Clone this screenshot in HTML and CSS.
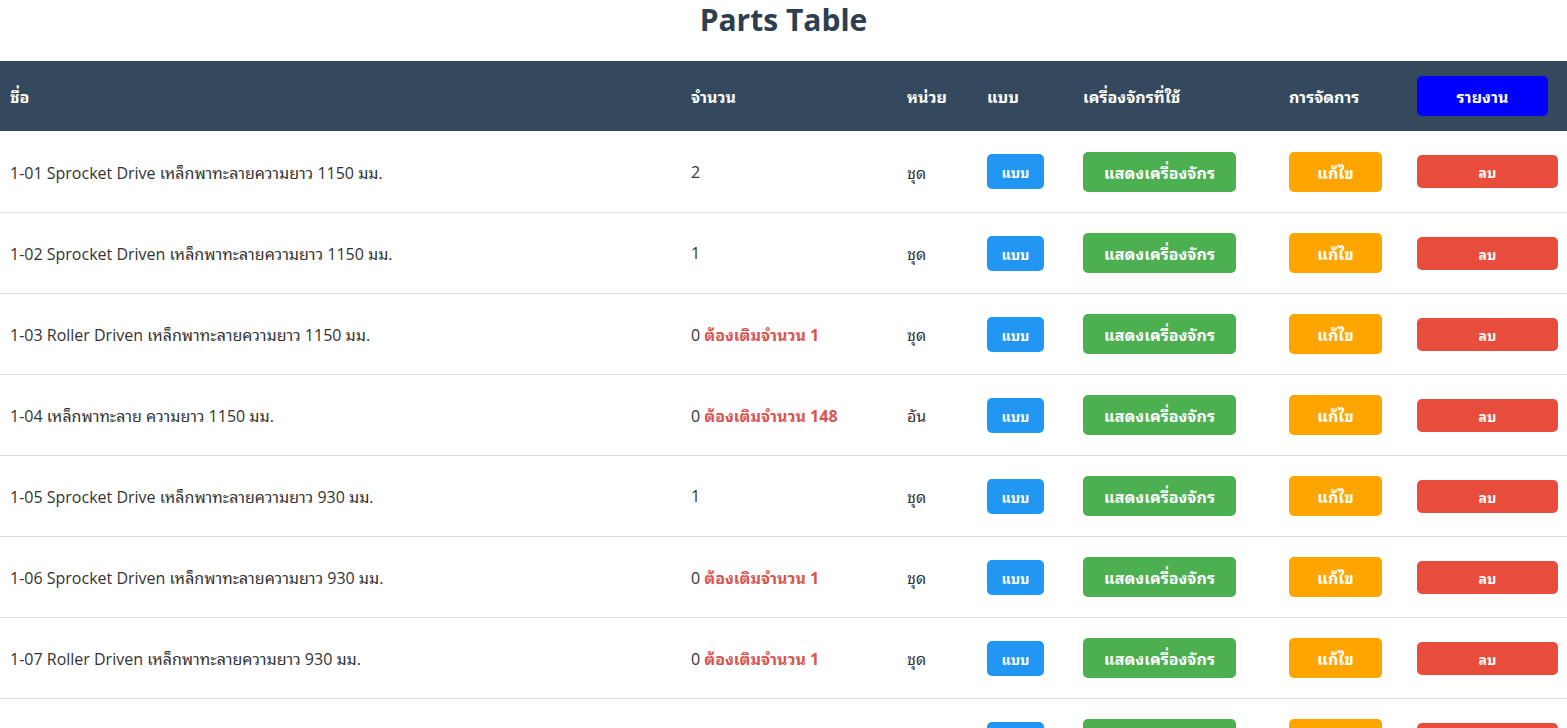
FILE: index.html
```html
<!DOCTYPE html>
<html lang="th">
<head>
<meta charset="utf-8">
<title>Parts Table</title>
<link rel="stylesheet" href="styles.css">
</head>
<body>
<h1 class="title">Parts Table</h1>
<table class="parts">
  <colgroup>
    <col class="c-name"><col class="c-qty"><col class="c-unit"><col class="c-model"><col class="c-mach"><col class="c-edit"><col class="c-del">
  </colgroup>
  <thead>
    <tr>
      <th>ชื่อ</th><th>จำนวน</th><th>หน่วย</th><th>แบบ</th><th>เครื่องจักรที่ใช้</th><th>การจัดการ</th><th><button class="btn btn-report">รายงาน</button></th>
    </tr>
  </thead>
  <tbody>
    <tr><td>1-01 Sprocket Drive เหล็กพาทะลายความยาว 1150 มม.</td><td>2</td><td>ชุด</td><td><button class="btn btn-model">แบบ</button></td><td><button class="btn btn-mach">แสดงเครื่องจักร</button></td><td><button class="btn btn-edit">แก้ไข</button></td><td><button class="btn btn-del">ลบ</button></td></tr>
    <tr><td>1-02 Sprocket Driven เหล็กพาทะลายความยาว 1150 มม.</td><td>1</td><td>ชุด</td><td><button class="btn btn-model">แบบ</button></td><td><button class="btn btn-mach">แสดงเครื่องจักร</button></td><td><button class="btn btn-edit">แก้ไข</button></td><td><button class="btn btn-del">ลบ</button></td></tr>
    <tr><td>1-03 Roller Driven เหล็กพาทะลายความยาว 1150 มม.</td><td>0 <span class="warn">ต้องเติมจำนวน 1</span></td><td>ชุด</td><td><button class="btn btn-model">แบบ</button></td><td><button class="btn btn-mach">แสดงเครื่องจักร</button></td><td><button class="btn btn-edit">แก้ไข</button></td><td><button class="btn btn-del">ลบ</button></td></tr>
    <tr><td>1-04 เหล็กพาทะลาย ความยาว 1150 มม.</td><td>0 <span class="warn">ต้องเติมจำนวน 148</span></td><td>อัน</td><td><button class="btn btn-model">แบบ</button></td><td><button class="btn btn-mach">แสดงเครื่องจักร</button></td><td><button class="btn btn-edit">แก้ไข</button></td><td><button class="btn btn-del">ลบ</button></td></tr>
    <tr><td>1-05 Sprocket Drive เหล็กพาทะลายความยาว 930 มม.</td><td>1</td><td>ชุด</td><td><button class="btn btn-model">แบบ</button></td><td><button class="btn btn-mach">แสดงเครื่องจักร</button></td><td><button class="btn btn-edit">แก้ไข</button></td><td><button class="btn btn-del">ลบ</button></td></tr>
    <tr><td>1-06 Sprocket Driven เหล็กพาทะลายความยาว 930 มม.</td><td>0 <span class="warn">ต้องเติมจำนวน 1</span></td><td>ชุด</td><td><button class="btn btn-model">แบบ</button></td><td><button class="btn btn-mach">แสดงเครื่องจักร</button></td><td><button class="btn btn-edit">แก้ไข</button></td><td><button class="btn btn-del">ลบ</button></td></tr>
    <tr><td>1-07 Roller Driven เหล็กพาทะลายความยาว 930 มม.</td><td>0 <span class="warn">ต้องเติมจำนวน 1</span></td><td>ชุด</td><td><button class="btn btn-model">แบบ</button></td><td><button class="btn btn-mach">แสดงเครื่องจักร</button></td><td><button class="btn btn-edit">แก้ไข</button></td><td><button class="btn btn-del">ลบ</button></td></tr>
    <tr class="peek"><td></td><td></td><td></td><td><button class="btn btn-model" aria-label="แบบ"></button></td><td><button class="btn btn-mach" aria-label="แสดงเครื่องจักร"></button></td><td><button class="btn btn-edit" aria-label="แก้ไข"></button></td><td><button class="btn btn-del" aria-label="ลบ"></button></td></tr>
  </tbody>
</table>
</body>
</html>
```
FILE: styles.css
```css
html, body {
  margin: 0;
  padding: 0;
  background: #ffffff;
}
body {
  font-family: "Open Sans", "Noto Sans Thai Looped", "Noto Sans", "Noto Sans Thai", "Liberation Sans", sans-serif;
  color: #333333;
  font-size: 16px;
}
.title {
  margin: 0;
  height: 61px;
  line-height: 40px;
  text-align: center;
  font-size: 30px;
  font-weight: 700;
  color: #2c3e50;
}
.parts {
  width: 100%;
  border-collapse: collapse;
  table-layout: fixed;
}
.c-name { width: 681px; }
.c-qty { width: 216px; }
.c-unit { width: 80px; }
.c-model { width: 96px; }
.c-mach { width: 206px; }
.c-edit { width: 128px; }
.c-del { width: 160px; }
.parts th {
  background: #34495e;
  color: #ffffff;
  font-weight: 700;
  font-size: 16px;
  text-align: left;
  height: 70px;
  padding: 0 10px;
  box-sizing: border-box;
}
.parts td {
  height: 81px;
  padding: 1px 10px 0;
  box-sizing: border-box;
  border-bottom: 1px solid #dddddd;
  vertical-align: middle;
}
.warn {
  color: #d9534f;
  font-weight: 700;
}
.btn {
  border: none;
  color: #ffffff;
  font-family: inherit;
  font-weight: 700;
  border-radius: 5px;
  cursor: pointer;
  padding: 0;
  display: inline-block;
  vertical-align: middle;
}
.btn-report {
  background: #0000ff;
  width: 131px;
  height: 40px;
  font-size: 16px;
}
.btn-model {
  background: #2196f3;
  width: 57px;
  height: 35px;
  font-size: 14px;
}
.btn-mach {
  background: #4caf50;
  width: 153px;
  height: 40px;
  font-size: 16px;
}
.btn-edit {
  background: #ffa500;
  width: 93px;
  height: 40px;
  font-size: 16px;
}
.btn-del {
  background: #e74c3c;
  width: 141px;
  height: 33px;
  font-size: 14px;
}
```
